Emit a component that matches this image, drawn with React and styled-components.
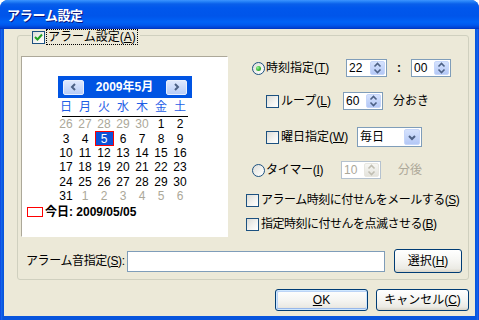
import styled, { createGlobalStyle } from "styled-components";

const Global = createGlobalStyle`
  html, body { margin: 0; padding: 0; background: #fff; }
  body {
    font-family: "Liberation Sans", "Noto Sans CJK JP", sans-serif;
    font-size: 12px;
    color: #000;
  }
`;

const FONT = `"Liberation Sans", "Noto Sans CJK JP", sans-serif`;

const Window = styled.div`
  width: 479px;
  height: 320px;
  box-sizing: border-box;
  display: flex;
  flex-direction: column;
  border-radius: 8px 8px 0 0;
  overflow: hidden;
  background: linear-gradient(to right, #0831d9 0, #166aee 1px, #0855dd 3px, #0855dd calc(100% - 3px), #166aee calc(100% - 1px), #0831d9 100%);
`;

const TitleBar = styled.div`
  height: 29px;
  flex: none;
  display: flex;
  align-items: center;
  padding-left: 7px;
  background: linear-gradient(
    to bottom,
    #3d95ff 0,
    #1f7cf5 2px,
    #0a5fea 4px,
    #0057ec 8px,
    #0055ea 16px,
    #0062f6 22px,
    #0058ee 25px,
    #0040d0 28px,
    #0032bb 29px
  );
`;

const TitleText = styled.span`
  color: #fff;
  font-family: "Noto Sans CJK JP", sans-serif;
  font-weight: 700;
  font-size: 13px;
  line-height: 1;
  letter-spacing: -0.3px;
  text-shadow: 1px 1px 0 #0a1883;
`;

const Client = styled.div`
  flex: 1;
  margin: 0 4px 4px 4px;
  background: #ece9d8;
  display: flex;
  flex-direction: column;
  padding: 6px 6px 0 13px;
`;

const GroupBox = styled.div`
  border: 1px solid #d0d0bf;
  border-radius: 3px;
  padding: 0 3px 6px 3px;
  display: flex;
  flex-direction: column;
`;

const Legend = styled.div`
  margin: -7px 0 0 10px;
  height: 16px;
  width: fit-content;
  display: flex;
  align-items: center;
  background: #ece9d8;
  padding: 0 2px 0 1px;
`;

const FocusText = styled.span`
  margin-left: 1px;
  padding: 0 1px;
  line-height: 14px;
  border: 1px dotted #000;
`;

const TopRow = styled.div`
  display: flex;
  margin-top: 11px;
`;

const Panel = styled.div`
  width: 207px;
  height: 181px;
  box-sizing: border-box;
  background: #fff;
  border-top: 1px solid #aca899;
  border-left: 1px solid #aca899;
  border-right: 1px solid #fff;
  border-bottom: 1px solid #fff;
  display: flex;
  flex-direction: column;
  align-items: center;
`;

const Calendar = styled.div`
  margin-top: 19px;
  width: 134px;
  display: flex;
  flex-direction: column;
`;

const CalHeader = styled.div`
  height: 22px;
  background: #0054e3;
  display: flex;
  align-items: center;
  justify-content: space-between;
  padding: 0 5px;
`;

const NavButton = styled.div`
  width: 21px;
  height: 15px;
  box-sizing: border-box;
  border: 1px solid #e9effd;
  border-radius: 2px;
  background: linear-gradient(to bottom, #dfe8fd, #b9cdf7);
  display: flex;
  align-items: center;
  justify-content: center;
`;

const MonthTitle = styled.span`
  color: #fff;
  font-weight: 700;
  font-size: 12px;
  line-height: 1;
`;

const DayGrid = styled.div`
  display: grid;
  grid-template-columns: repeat(7, 19px);
  grid-auto-rows: ${({ $row }) => $row};
  margin-left: -1px;
`;

const DayName = styled.div`
  display: flex;
  align-items: center;
  justify-content: center;
  color: #1e5ee6;
  font-size: 12px;
  line-height: 1;
`;

const Rule = styled.div`
  height: 1px;
  background: #000;
  margin: 0 4px 0 4px;
`;

const Day = styled.div`
  display: flex;
  align-items: center;
  justify-content: center;
  font-size: 12px;
  line-height: 1;
  color: ${({ $muted, $selected }) => ($selected ? "#fff" : $muted ? "#aca899" : "#000")};
  background: ${({ $selected }) => ($selected ? "#0c52d8" : "transparent")};
  box-shadow: ${({ $selected }) => ($selected ? "inset 0 0 0 1px #ff0000" : "none")};
`;

const Today = styled.div`
  align-self: flex-start;
  margin: 3px 0 0 5px;
  display: flex;
  align-items: center;
  height: 12px;
`;

const TodayMark = styled.div`
  width: 16px;
  height: 10px;
  box-sizing: border-box;
  border: 1px solid #ff0000;
`;

const TodayText = styled.span`
  margin-left: 2px;
  font-weight: 700;
  font-size: 12px;
  line-height: 1;
`;

const Options = styled.div`
  margin-left: 18px;
  padding-top: 3px;
  display: flex;
  flex-direction: column;
`;

const OptRow = styled.div`
  display: flex;
  align-items: center;
  height: ${({ $h }) => $h}px;
  margin-top: ${({ $top }) => $top || 0}px;
  padding-left: ${({ $indent }) => $indent || 0}px;
`;

const LabelBlock = styled.div`
  display: flex;
  align-items: center;
  width: ${({ $w }) => ($w ? `${$w}px` : "auto")};
  flex: none;
`;

const LabelText = styled.span`
  margin-left: ${({ $gap }) => $gap ?? 3}px;
  line-height: 1;
  white-space: nowrap;
  letter-spacing: ${({ $ls }) => $ls || 0}px;
  color: ${({ $disabled }) => ($disabled ? "#aca899" : "#000")};
`;

const CheckBox = styled.div`
  width: 13px;
  height: 13px;
  box-sizing: border-box;
  border: 1px solid #1c5180;
  background: linear-gradient(135deg, #dcdcd7 0%, #f4f4f1 60%, #ffffff 100%);
  display: flex;
  align-items: center;
  justify-content: center;
  flex: none;
`;

const Radio = styled.div`
  width: 13px;
  height: 13px;
  box-sizing: border-box;
  border: 1px solid #1c5180;
  border-radius: 50%;
  background: linear-gradient(135deg, #dcdcd7 0%, #f4f4f1 60%, #ffffff 100%);
  display: flex;
  align-items: center;
  justify-content: center;
  flex: none;
`;

const RadioDot = styled.div`
  width: 5px;
  height: 5px;
  border-radius: 50%;
  background: radial-gradient(circle at 35% 35%, #9cf59c 0, #3dbb3d 50%, #1a8e1a 100%);
`;

const Spin = styled.div`
  width: ${({ $w }) => $w}px;
  height: 18px;
  box-sizing: border-box;
  border: 1px solid ${({ $disabled }) => ($disabled ? "#b5c2cf" : "#7f9db9")};
  background: #fff;
  display: flex;
  align-items: center;
  flex: none;
`;

const SpinValue = styled.span`
  flex: 1;
  padding-left: 2px;
  line-height: 1;
  color: ${({ $disabled }) => ($disabled ? "#aca899" : "#000")};
`;

const SpinButton = styled.div`
  width: 15px;
  height: 14px;
  margin: 0 1px;
  border-radius: 2px;
  background: ${({ $disabled }) =>
    $disabled ? "linear-gradient(to bottom, #f7f7f4, #e4e3dc)" : "linear-gradient(to bottom, #d5e2fd, #b4c8f6)"};
  border: 1px solid ${({ $disabled }) => ($disabled ? "#e8e7e0" : "#c6d6fa")};
  box-sizing: border-box;
  display: flex;
  align-items: center;
  justify-content: center;
`;

const Colon = styled.span`
  margin: 0 10px 0 10px;
  font-weight: 700;
  line-height: 1;
`;

const Unit = styled.span`
  margin-left: ${({ $gap }) => $gap}px;
  line-height: 1;
  color: ${({ $disabled }) => ($disabled ? "#aca899" : "#000")};
`;

const Select = styled.div`
  width: 65px;
  height: 20px;
  box-sizing: border-box;
  border: 1px solid #7f9db9;
  background: #fff;
  display: flex;
  align-items: center;
`;

const SelectButton = styled.div`
  width: 16px;
  height: 16px;
  margin: 0 1px;
  border-radius: 2px;
  box-sizing: border-box;
  border: 1px solid #c6d6fa;
  background: linear-gradient(to bottom, #d5e2fd, #b4c8f6);
  display: flex;
  align-items: center;
  justify-content: center;
`;

const SoundRow = styled.div`
  display: flex;
  align-items: center;
  margin-top: 12px;
  height: 24px;
`;

const SoundLabel = styled.span`
  width: 106px;
  padding-left: 5px;
  box-sizing: border-box;
  line-height: 1;
  white-space: nowrap;
  letter-spacing: -0.4px;
`;

const TextInput = styled.div`
  width: 258px;
  height: 21px;
  box-sizing: border-box;
  border: 1px solid #7f9db9;
  background: #fff;
`;

const Button = styled.div`
  width: ${({ $w }) => $w}px;
  height: ${({ $h }) => $h}px;
  box-sizing: border-box;
  border: 1px solid #003c74;
  border-radius: 3px;
  background: linear-gradient(to bottom, #ffffff 0%, #f5f5f2 50%, #ebeae4 85%, #d8d4c8 100%);
  display: flex;
  align-items: center;
  justify-content: center;
  margin-left: ${({ $ml }) => $ml || 0}px;
  box-shadow: ${({ $default }) =>
    $default ? "inset 0 0 0 1px #cee7ff, inset 0 -1px 0 1px #98b8ea, inset 1px 1px 0 1px #bcd4f6" : "none"};
  line-height: 1;
`;

const ButtonRow = styled.div`
  display: flex;
  justify-content: flex-end;
  margin-top: 9px;
`;

const Chevron = ({ dir, color = "#4d6185" }) => {
  const paths = {
    left: "M5 1 L2 4 L5 7",
    right: "M2 1 L5 4 L2 7",
    down: "M1 2 L4 5 L7 2",
  };
  const w = dir === "down" ? 8 : 7;
  const h = dir === "down" ? 7 : 8;
  return (
    <svg width={w} height={h} viewBox={`0 0 ${w} ${h}`}>
      <path d={paths[dir]} fill="none" stroke={color} strokeWidth="2" />
    </svg>
  );
};

const UpDown = ({ color = "#4d6185" }) => (
  <svg width="9" height="12" viewBox="0 0 9 12">
    <path d="M1.5 4.5 L4.5 1.5 L7.5 4.5" fill="none" stroke={color} strokeWidth="1.6" />
    <path d="M1.5 7.5 L4.5 10.5 L7.5 7.5" fill="none" stroke={color} strokeWidth="1.6" />
  </svg>
);

const Check = () => (
  <svg width="9" height="9" viewBox="0 0 9 9">
    <path d="M1 4 L3.5 6.5 L8 1.5" fill="none" stroke="#21a121" strokeWidth="2" />
  </svg>
);

const Acc = ({ text, k, tail = ")" }) => (
  <>
    {text}(<u>{k}</u>
    {tail}
  </>
);

const SpinBox = ({ value, w, disabled }) => (
  <Spin $w={w} $disabled={disabled}>
    <SpinValue $disabled={disabled}>{value}</SpinValue>
    <SpinButton $disabled={disabled}>
      <UpDown color={disabled ? "#c0beb2" : "#4d6185"} />
    </SpinButton>
  </Spin>
);

const weekNames = ["日", "月", "火", "水", "木", "金", "土"];

const days = [
  [26, 1], [27, 1], [28, 1], [29, 1], [30, 1], [1], [2],
  [3], [4], [5, 0, 1], [6], [7], [8], [9],
  [10], [11], [12], [13], [14], [15], [16],
  [17], [18], [19], [20], [21], [22], [23],
  [24], [25], [26], [27], [28], [29], [30],
  [31], [1, 1], [2, 1], [3, 1], [4, 1], [5, 1], [6, 1],
];

export default function App() {
  return (
    <>
      <Global />
      <Window>
        <TitleBar>
          <TitleText>アラーム設定</TitleText>
        </TitleBar>
        <Client>
          <GroupBox>
            <Legend>
              <CheckBox>
                <Check />
              </CheckBox>
              <FocusText>
                <Acc text="アラーム設定" k="A" />
              </FocusText>
            </Legend>

            <TopRow>
              <Panel>
                <Calendar>
                  <CalHeader>
                    <NavButton>
                      <Chevron dir="left" />
                    </NavButton>
                    <MonthTitle>2009年5月</MonthTitle>
                    <NavButton>
                      <Chevron dir="right" />
                    </NavButton>
                  </CalHeader>
                  <DayGrid $row="18px">
                    {weekNames.map((n) => (
                      <DayName key={n}>{n}</DayName>
                    ))}
                  </DayGrid>
                  <Rule />
                  <DayGrid $row="14.4px">
                    {days.map(([d, muted, sel], i) => (
                      <Day key={i} $muted={muted} $selected={sel}>
                        {d}
                      </Day>
                    ))}
                  </DayGrid>
                </Calendar>
                <Today>
                  <TodayMark />
                  <TodayText>今日: 2009/05/05</TodayText>
                </Today>
              </Panel>

              <Options>
                <OptRow $h={18} $indent={6}>
                  <LabelBlock $w={94}>
                    <Radio>
                      <RadioDot />
                    </Radio>
                    <LabelText $gap={1}>
                      <Acc text="時刻指定" k="T" />
                    </LabelText>
                  </LabelBlock>
                  <SpinBox value="22" w={41} />
                  <Colon>:</Colon>
                  <SpinBox value="00" w={40} />
                </OptRow>

                <OptRow $h={18} $top={15} $indent={20}>
                  <LabelBlock $w={77}>
                    <CheckBox />
                    <LabelText $gap={2}>
                      <Acc text="ループ" k="L" />
                    </LabelText>
                  </LabelBlock>
                  <SpinBox value="60" w={40} />
                  <Unit $gap={10}>分おき</Unit>
                </OptRow>

                <OptRow $h={20} $top={17} $indent={20}>
                  <LabelBlock $w={91}>
                    <CheckBox />
                    <LabelText $gap={2}>
                      <Acc text="曜日指定" k="W" />
                    </LabelText>
                  </LabelBlock>
                  <Select>
                    <SpinValue>毎日</SpinValue>
                    <SelectButton>
                      <Chevron dir="down" />
                    </SelectButton>
                  </Select>
                </OptRow>

                <OptRow $h={18} $top={14} $indent={6}>
                  <LabelBlock $w={89}>
                    <Radio />
                    <LabelText $gap={1} $ls={-0.3}>
                      <Acc text="タイマー" k="I" />
                    </LabelText>
                  </LabelBlock>
                  <SpinBox value="10" w={40} disabled />
                  <Unit $gap={17} $disabled>
                    分後
                  </Unit>
                </OptRow>

                <OptRow $h={16} $top={13}>
                  <LabelBlock>
                    <CheckBox />
                    <LabelText $gap={2} $ls={-0.5}>
                      <Acc text="アラーム時刻に付せんをメールする" k="S" />
                    </LabelText>
                  </LabelBlock>
                </OptRow>

                <OptRow $h={16} $top={8}>
                  <LabelBlock>
                    <CheckBox />
                    <LabelText $gap={2} $ls={-0.5}>
                      <Acc text="指定時刻に付せんを点滅させる" k="B" />
                    </LabelText>
                  </LabelBlock>
                </OptRow>
              </Options>
            </TopRow>

            <SoundRow>
              <SoundLabel>
                <Acc text="アラーム音指定" k="S" tail="):" />
              </SoundLabel>
              <TextInput />
              <Button $w={68} $h={24} $ml={9}>
                <Acc text="選択" k="H" />
              </Button>
            </SoundRow>
          </GroupBox>

          <ButtonRow>
            <Button $w={93} $h={22} $default>
              <u>O</u>K
            </Button>
            <Button $w={93} $h={22} $ml={8}>
              <Acc text="キャンセル" k="C" />
            </Button>
          </ButtonRow>
        </Client>
      </Window>
    </>
  );
}
